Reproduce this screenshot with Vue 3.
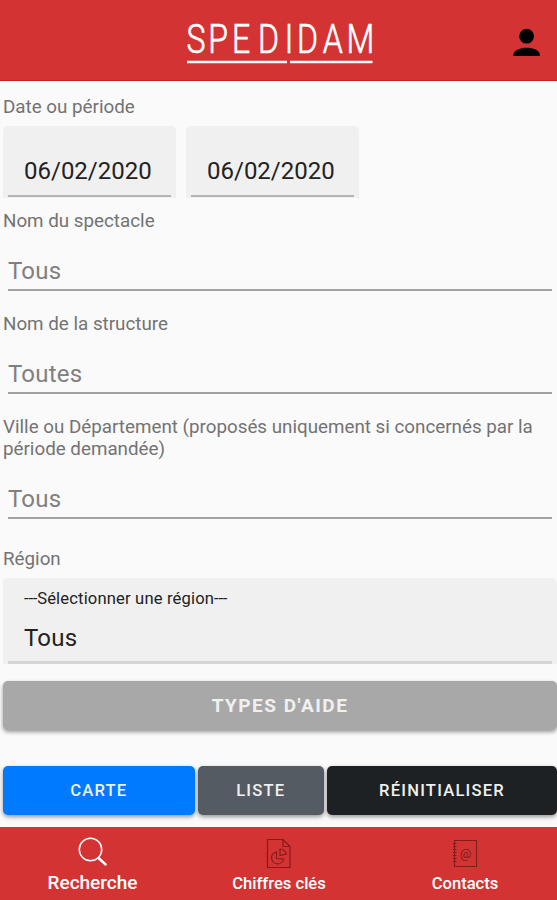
<script setup>
const dates = ['06/02/2020', '06/02/2020']
const fields = [
  { id: 'show', label: 'Nom du spectacle', value: 'Tous' },
  { id: 'company', label: 'Nom de la structure', value: 'Toutes' },
  {
    id: 'city',
    label: 'Ville ou Département (proposés uniquement si concernés par la période demandée)',
    value: 'Tous'
  }
]
</script>

<template>
  <div class="screen">
    <header class="bar">
      <svg class="logo" width="200" height="54" viewBox="0 0 200 54">
        <text class="logo-text" transform="translate(0 33.5) scale(.8 1)" x="3 30.200 60 92.500 126 141.200 173.500 203.200">SPEDIDAM</text>
        <path d="M3 43H103M106 43H188.500" stroke="#fff" stroke-width="2.600" />
      </svg>
      <svg class="user" width="28" height="30" viewBox="0 0 28 30">
        <circle cx="13.600" cy="8.2" r="7.4" />
        <path d="M.4 28v-1.2C.4 22 7.600 19.800 13.600 19.800S26.800 22 26.800 26.800V28Z" />
      </svg>
    </header>

    <main class="form">
      <div class="label first">Date ou période</div>
      <div class="dates">
        <div v-for="(d, i) in dates" :key="i" class="date"><span>{{ d }}</span></div>
      </div>

      <section v-for="f in fields" :key="f.id" class="field" :class="f.id">
        <div class="label">{{ f.label }}</div>
        <div class="input">{{ f.value }}</div>
      </section>

      <div class="label region-label">Région</div>
      <div class="select">
        <div class="prompt"><span class="dashes">---</span>Sélectionner une région<span class="dashes">---</span></div>
        <div class="choice">Tous</div>
      </div>

      <button class="btn types">TYPES D'AIDE</button>
      <div class="actions">
        <button class="btn map">CARTE</button>
        <button class="btn list">LISTE</button>
        <button class="btn reset">RÉINITIALISER</button>
      </div>
    </main>

    <nav class="tabs">
      <div class="tab active">
        <svg width="32" height="32" viewBox="0 0 32 32" fill="none" stroke="#fff">
          <circle cx="13.500" cy="12.500" r="11.200" stroke-width="1.500" />
          <path d="M21 20.500l8.300 7.600" stroke-width="2.600" />
        </svg>
        <span>Recherche</span>
      </div>
      <div class="tab">
        <svg width="32" height="32" viewBox="0 0 32 32" fill="none" stroke="#801c1c" stroke-width="1.200">
          <path d="M4.500 2.500H20L27 9.500V30.500H4.500ZM20 2.500V9.500H27" />
          <path d="M13.500 15a6 6 0 1 0 7 7l-7-.5Z" />
          <path d="M17 18.500v-6.500a6.500 6.500 0 0 1 6.200 5Z" />
        </svg>
        <span>Chiffres clés</span>
      </div>
      <div class="tab">
        <svg width="32" height="32" viewBox="0 0 32 32" fill="none" stroke="#801c1c" stroke-width="1.100">
          <path d="M5.500 3.500H27.500V29.500H5.500Z" />
          <path d="M4 6.500h3.500M4 9.500h3.500M4 12.500h3.500M4 15.500h3.500M4 18.500h3.500M4 21.500h3.500M4 24.500h3.500" />
          <text class="at" x="16.700" y="20.500" text-anchor="middle">@</text>
        </svg>
        <span>Contacts</span>
      </div>
    </nav>
  </div>
</template>

<style>
body {
  margin: 0;
  background: #fafafa;
}
</style>

<style scoped>
.screen {
  width: 557px;
  height: 900px;
  display: flex;
  flex-direction: column;
  overflow: hidden;
  background: #fafafa;
  font-family: Roboto, "Liberation Sans", sans-serif;
}
.bar {
  box-sizing: border-box;
  height: 81px;
  flex: none;
  display: flex;
  align-items: flex-start;
  padding: 19px 16px 0 184px;
  background: #d43333;
  border-bottom: 1px solid #c91f22;
}
.logo {
  overflow: visible;
}
.logo-text {
  font-family: Roboto, sans-serif;
  font-weight: 300;
  font-size: 40px;
  fill: #fff;
  stroke: #fff;
  stroke-width: 0.7px;
}
.user {
  margin: 9px 0 0 auto;
}
.form {
  flex: 1;
  padding-left: 3px;
}
.label {
  font-size: 18.8px;
  line-height: 22px;
  color: #737373;
}
.first {
  padding-top: 14.5px;
}
.dates {
  display: flex;
  gap: 10px;
  margin-top: 8.5px;
}
.date {
  box-sizing: border-box;
  width: 173px;
  height: 72px;
  padding: 0 5px;
  background: #f0f0f0;
  border-radius: 5px 5px 0 0;
}
.date span {
  display: block;
  height: 69px;
  border-bottom: 2px solid #b4b4b4;
  padding-left: 16px;
  line-height: 90px;
  font-size: 24px;
  color: #222;
}
.field {
  display: flex;
  flex-direction: column;
}
.show {
  margin-top: 12px;
}
.company,
.city {
  margin-top: 22px;
}
.input {
  margin: 20px 5px 0 5px;
  height: 37px;
  line-height: 39px;
  border-bottom: 2px solid #a0a0a0;
  font-size: 24px;
  letter-spacing: 0.2px;
  color: #808080;
}
.region-label {
  margin-top: 29px;
}
.select {
  box-sizing: border-box;
  height: 86px;
  margin-top: 8px;
  padding: 12px 0 0 21px;
  background: linear-gradient(#d6d6d6, #d6d6d6) 5px 100% / calc(100% - 10px) 3px no-repeat, #f0f0f0;
  border-radius: 5px 5px 0 0;
}
.prompt {
  font-size: 16.6px;
  line-height: 18px;
  letter-spacing: 0.15px;
  color: #222;
}
.dashes {
  letter-spacing: -0.2px;
}
.choice {
  margin-top: 16px;
  font-size: 24px;
  line-height: 28px;
  letter-spacing: 0.2px;
  color: #222;
}
.btn {
  display: block;
  height: 49px;
  border: 0;
  border-radius: 5px;
  padding: 0;
  font-family: inherit;
  font-size: 16.6px;
  font-weight: 500;
  letter-spacing: 1.2px;
  color: #f0f0f0;
  box-shadow: 0 2px 4px rgba(0, 0, 0, 0.4);
}
.types {
  width: 100%;
  margin-top: 17px;
  background: #a8a8a8;
  font-size: 19px;
  font-weight: 700;
  letter-spacing: 1.5px;
}
.actions {
  display: grid;
  grid-template-columns: 191.5px 126.5px 230px;
  gap: 3px;
  margin-top: 36px;
}
.map {
  background: #007aff;
}
.list {
  background: #545b62;
}
.reset {
  background: #1d2124;
}
.tabs {
  flex: none;
  height: 73px;
  display: grid;
  grid-template-columns: 185px 188px 184px;
  background: #d43333;
}
.tab {
  display: flex;
  flex-direction: column;
  align-items: center;
  padding-top: 10px;
  font-size: 16.6px;
  font-weight: 500;
  line-height: 24px;
  color: #fff;
}
.tab span {
  margin-top: 3px;
}
.active {
  font-size: 19px;
}
.active span {
  margin-top: 2px;
}
.at {
  font-size: 13px;
  font-weight: 400;
  fill: #801c1c;
  stroke: none;
}
</style>
